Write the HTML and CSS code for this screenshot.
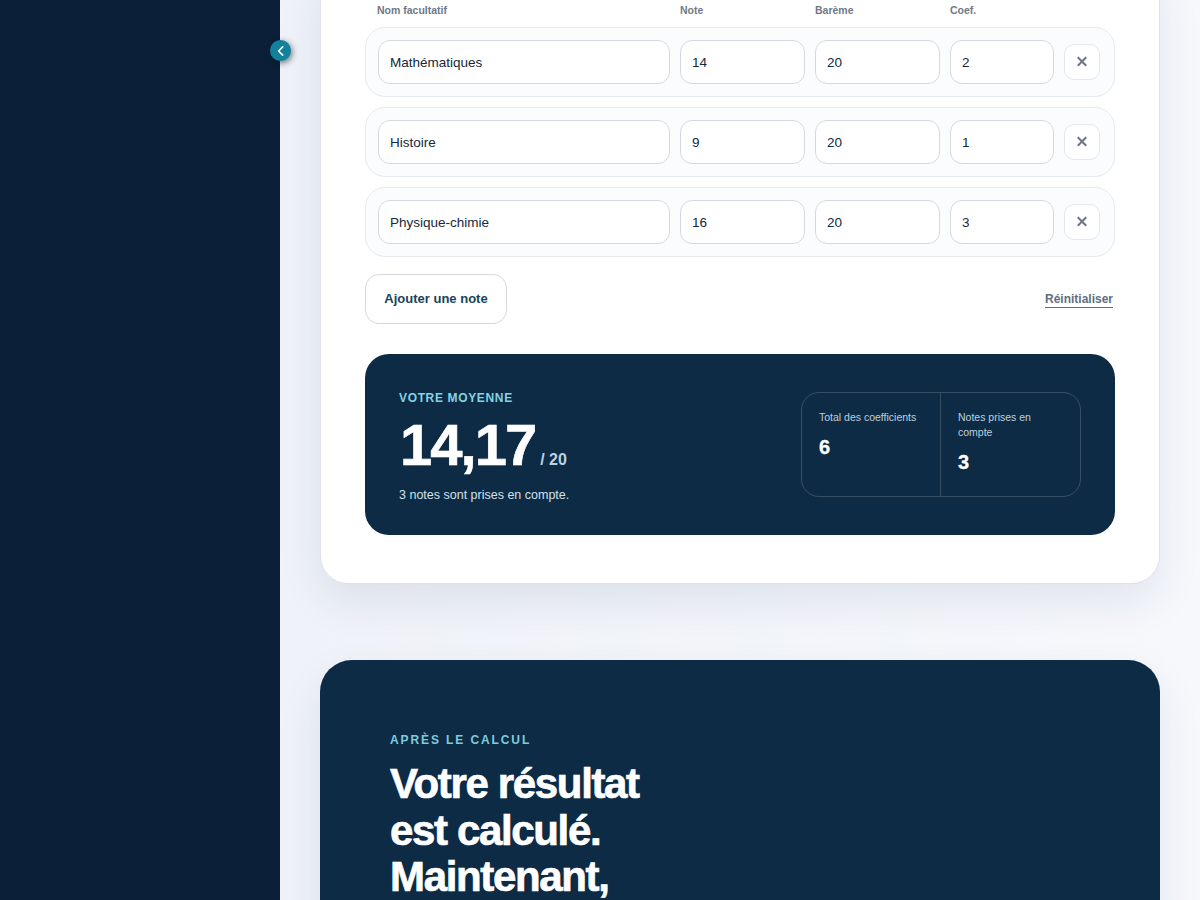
FILE: index.html
```html
<!DOCTYPE html>
<html lang="fr">
<head>
<meta charset="utf-8">
<title>Calculateur de moyenne</title>
<link rel="stylesheet" href="styles.css">
</head>
<body>
<div class="layout">
  <aside class="sidebar">
    <button class="toggle" aria-label="Réduire">
      <svg viewBox="0 0 10 10" width="12" height="12"><path d="M6.4 1.6 3 5l3.4 3.4" fill="none" stroke="#fff" stroke-width="1.3" stroke-linecap="round" stroke-linejoin="round"/></svg>
    </button>
  </aside>
  <main class="main">
    <section class="card">
      <div class="labels">
        <span>Nom facultatif</span><span>Note</span><span>Barème</span><span>Coef.</span>
      </div>
      <div class="rows">
        <div class="row">
          <div class="field">Mathématiques</div><div class="field">14</div><div class="field">20</div><div class="field">2</div>
          <button class="remove" aria-label="Supprimer"><svg viewBox="0 0 12 12" width="12" height="12"><path d="M1.8 1.3l8.4 8.4M10.2 1.3l-8.4 8.4" stroke="#6b7684" stroke-width="2" fill="none"/></svg></button>
        </div>
        <div class="row">
          <div class="field">Histoire</div><div class="field">9</div><div class="field">20</div><div class="field">1</div>
          <button class="remove" aria-label="Supprimer"><svg viewBox="0 0 12 12" width="12" height="12"><path d="M1.8 1.3l8.4 8.4M10.2 1.3l-8.4 8.4" stroke="#6b7684" stroke-width="2" fill="none"/></svg></button>
        </div>
        <div class="row">
          <div class="field">Physique-chimie</div><div class="field">16</div><div class="field">20</div><div class="field">3</div>
          <button class="remove" aria-label="Supprimer"><svg viewBox="0 0 12 12" width="12" height="12"><path d="M1.8 1.3l8.4 8.4M10.2 1.3l-8.4 8.4" stroke="#6b7684" stroke-width="2" fill="none"/></svg></button>
        </div>
      </div>
      <div class="actions">
        <button class="add">Ajouter une note</button>
        <a class="reset">Réinitialiser</a>
      </div>
      <div class="result">
        <div class="result-main">
          <div class="eyebrow">VOTRE MOYENNE</div>
          <div class="score"><span class="value">14,17</span><span class="scale">/ 20</span></div>
          <div class="note">3 notes sont prises en compte.</div>
        </div>
        <div class="stats">
          <div class="stat"><div class="stat-label">Total des coefficients</div><div class="stat-value">6</div></div>
          <div class="stat"><div class="stat-label">Notes prises en compte</div><div class="stat-value">3</div></div>
        </div>
      </div>
    </section>
    <section class="after">
      <div class="after-eyebrow">APRÈS LE CALCUL</div>
      <h2 class="after-title">Votre résultat est calculé. Maintenant,</h2>
    </section>
  </main>
</div>
</body>
</html>
```
FILE: styles.css
```css
* { box-sizing: border-box; }
html, body { margin: 0; height: 900px; overflow: hidden; }
body { font-family: "Liberation Sans", Arial, sans-serif; color: #12263a; background: #f5f7fb; }
.layout { display: flex; height: 900px; overflow: hidden; }
.sidebar { position: relative; flex: 0 0 280px; background: #0b1f38; }
.toggle {
  position: absolute; top: 40px; right: -11px; width: 21px; height: 21px; padding: 0;
  display: flex; align-items: center; justify-content: center;
  border: 0; border-radius: 50%; background: #13809c;
  box-shadow: 1px 2px 6px rgba(6, 22, 40, .6);
}
.main { flex: 1; padding: 0 40px; background: linear-gradient(90deg, #eff2f8 0, #f6f8fc 100%); }
.card {
  margin-top: -40px; padding: 43px 44px 48px;
  background: #fff; border: 1px solid #dfe2e8; border-radius: 28px;
  box-shadow: 0 18px 44px rgba(24, 44, 84, .09);
}
.labels {
  display: grid; grid-template-columns: 293px 125px 125px 104px; column-gap: 10px;
  padding-left: 12px; margin-bottom: 10px;
  font-size: 10.5px; line-height: 13px; font-weight: 700; color: #6f7985;
}
.rows { display: flex; flex-direction: column; gap: 10px; }
.row {
  display: grid; grid-template-columns: 292px 125px 125px 104px 36px; column-gap: 10px; align-items: center;
  padding: 12px; height: 70px;
  background: #fbfcfd; border: 1px solid #e6e9ed; border-radius: 20px;
}
.field {
  height: 44px; padding: 0 11px; display: flex; align-items: center;
  background: #fff; border: 1px solid #d5d9df; border-radius: 12px;
  font-size: 13.5px; color: #14283c;
}
.remove {
  width: 36px; height: 36px; padding: 0; display: flex; align-items: center; justify-content: center;
  background: #fff; border: 1px solid #e4e7eb; border-radius: 10px;
}
.actions { display: flex; justify-content: space-between; align-items: center; margin-top: 17px; padding-right: 2px; }
.add {
  width: 142px; height: 50px; padding: 0 0 2px;
  background: #fff; border: 1px solid #d5d9df; border-radius: 14px;
  font-family: inherit; font-size: 13px; font-weight: 700; color: #17435c;
}
.reset { margin-top: 2px; font-size: 12px; line-height: 14px; font-weight: 700; color: #5f6e7e; border-bottom: 1px solid #5f6e7e; padding-bottom: 1px; }
.result {
  margin-top: 30px; height: 181px; padding: 38px 34px; display: flex; justify-content: space-between;
  background: #0d2b45; border-radius: 24px; color: #fff;
}
.eyebrow { font-size: 12px; line-height: 12px; font-weight: 700; letter-spacing: .65px; color: #84d2e2; }
.score { display: flex; align-items: baseline; gap: 5px; margin-top: 11px; padding-left: 1px; }
.value { font-size: 58px; line-height: 60px; font-weight: 700; letter-spacing: -2px; -webkit-text-stroke: .6px #fff; }
.scale { font-size: 16px; font-weight: 700; color: #bcd3e4; }
.note { margin-top: 12px; font-size: 12.5px; line-height: 16px; color: #d3e0ea; }
.stats {
  display: grid; grid-template-columns: 138px 141px; width: 280px; height: 105px;
  border: 1px solid rgba(255, 255, 255, .17); border-radius: 18px;
}
.stat { padding: 17px 17px; }
.stat + .stat { border-left: 1px solid rgba(255, 255, 255, .17); }
.stat-label { font-size: 10.5px; line-height: 15px; color: #bcd0df; }
.stat-value { margin-top: 10px; font-size: 20px; line-height: 24px; font-weight: 700; color: #fff; -webkit-text-stroke: .3px #fff; }
.after {
  margin-top: 76px; padding: 73px 70px 70px; height: 400px;
  background: #0d2b45; border-radius: 32px; color: #fff;
  box-shadow: 0 18px 44px rgba(24, 44, 84, .09);
}
.after-eyebrow { font-size: 12px; line-height: 14px; font-weight: 700; letter-spacing: 1.9px; color: #7fcbdc; }
.after-title {
  width: 300px; margin: 14px 0 0; font-size: 42px; line-height: 46.5px; font-weight: 700; letter-spacing: -1.35px; color: #fff;
  -webkit-text-stroke: .7px #fff;
}
```
